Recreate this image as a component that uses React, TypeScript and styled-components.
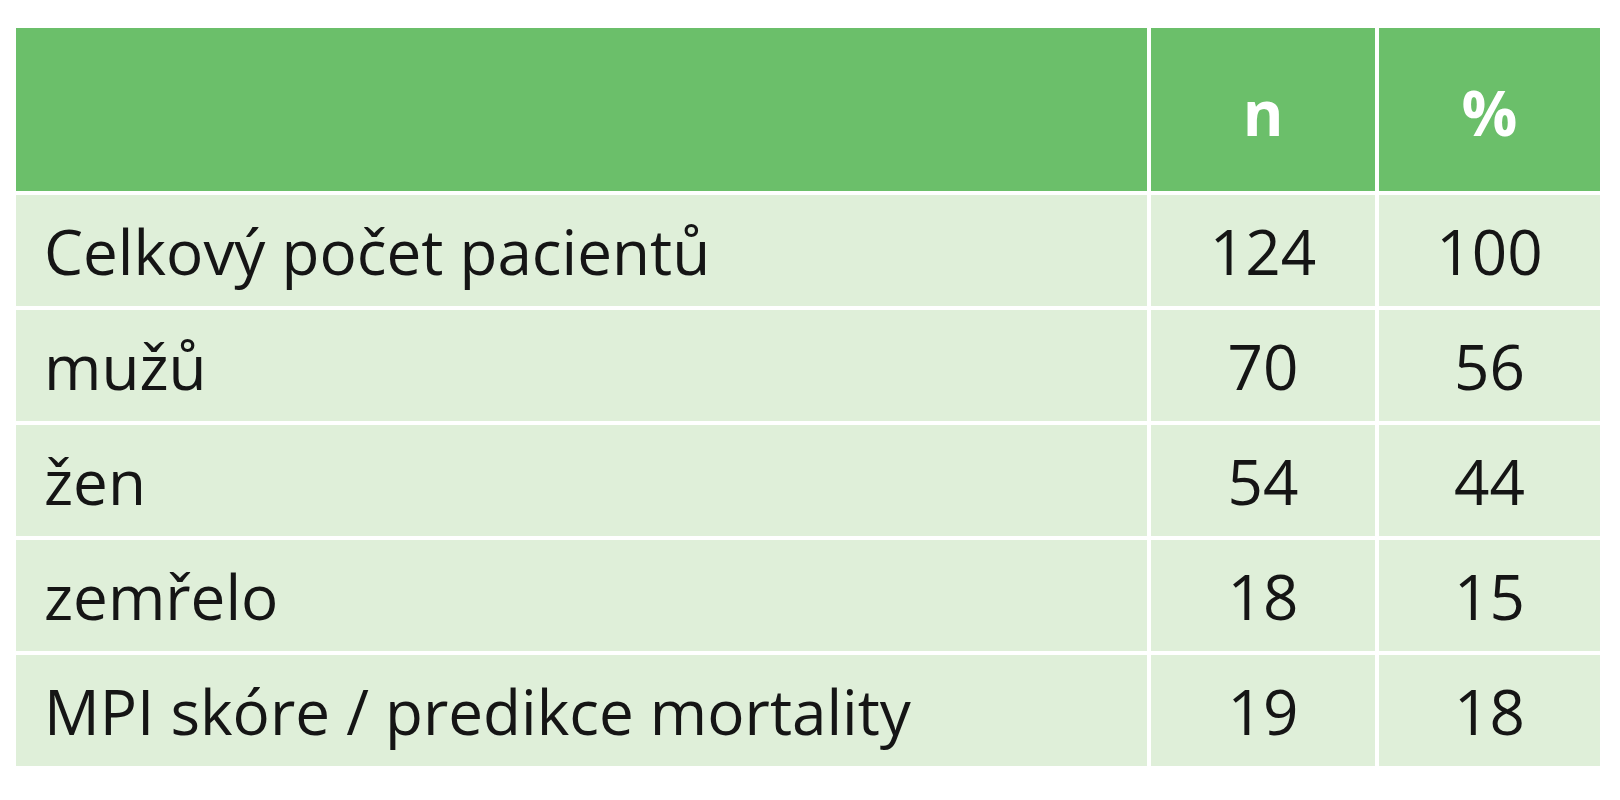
import { Fragment } from "react";
import styled, { createGlobalStyle } from "styled-components";

const GlobalStyle = createGlobalStyle`
  html, body {
    margin: 0;
    padding: 0;
    background: #ffffff;
  }
  body {
    font-family: "Open Sans", "Liberation Sans", sans-serif;
  }
`;

const Page = styled.div`
  width: 1620px;
  height: 800px;
  padding: 28px 20px 0 16px;
  box-sizing: border-box;
  background: #ffffff;
`;

const Table = styled.div`
  display: grid;
  grid-template-columns: 1131px 224px 221px;
  grid-template-rows: 163px repeat(5, 111px);
  gap: 4px;
  width: 1584px;
`;

const HeadCell = styled.div`
  background: #6bbf6a;
  color: #ffffff;
  font-weight: 700;
  font-size: 62px;
  display: flex;
  align-items: center;
  justify-content: center;
  padding-top: 4px;
  box-sizing: border-box;
`;

const Cell = styled.div<{ $num?: boolean }>`
  background: #dfefd9;
  color: #151515;
  font-size: 62px;
  display: flex;
  align-items: center;
  justify-content: ${(p) => (p.$num ? "center" : "flex-start")};
  padding-left: ${(p) => (p.$num ? "0" : "28px")};
  padding-top: 0;
  box-sizing: border-box;
  white-space: nowrap;
`;

const rows: [string, string, string][] = [
  ["Celkový počet pacientů", "124", "100"],
  ["mužů", "70", "56"],
  ["žen", "54", "44"],
  ["zemřelo", "18", "15"],
  ["MPI skóre / predikce mortality", "19", "18"],
];

export default function App() {
  return (
    <>
      <GlobalStyle />
      <Page>
        <Table>
          <HeadCell />
          <HeadCell>n</HeadCell>
          <HeadCell>%</HeadCell>
          {rows.map(([label, n, pct]) => (
            <Fragment key={label}>
              <Cell>{label}</Cell>
              <Cell $num>{n}</Cell>
              <Cell $num>{pct}</Cell>
            </Fragment>
          ))}
        </Table>
      </Page>
    </>
  );
}
